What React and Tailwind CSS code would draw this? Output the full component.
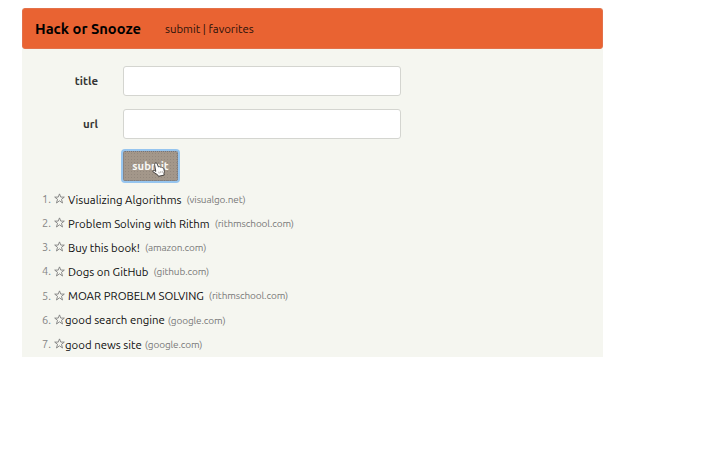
const stories = [
  { title: "Visualizing Algorithms", host: "visualgo.net", gap: "ml-[3px]", hostGap: "ml-[5px]" },
  { title: "Problem Solving with Rithm", host: "rithmschool.com", gap: "ml-[3px]", hostGap: "ml-[5px]" },
  { title: "Buy this book!", host: "amazon.com", gap: "ml-[3px]", hostGap: "ml-[5px]" },
  { title: "Dogs on GitHub", host: "github.com", gap: "ml-[3px]", hostGap: "ml-[5px]" },
  { title: "MOAR PROBELM SOLVING", host: "rithmschool.com", gap: "ml-[3px]", hostGap: "ml-[5px]" },
  { title: "good search engine", host: "google.com", gap: "ml-0", hostGap: "ml-[3px]" },
  { title: "good news site", host: "google.com", gap: "ml-0", hostGap: "ml-[3px]" },
];

function Star() {
  return (
    <svg className="mb-[1px] h-[11px] w-[11px] shrink-0" viewBox="0 0 11 11" fill="none" stroke="#808080" strokeWidth="0.9">
      <path d="M5.5 .9 6.8 4.1H10.3L7.5 6.3 8.5 10 5.5 7.8 2.5 10 3.5 6.3 .7 4.1H4.2Z" />
    </svg>
  );
}

function Hand() {
  return (
    <svg className="absolute left-[28px] top-[10px] h-[15px] w-[13px]" viewBox="0 0 13 15">
      <path
        d="M3.2 1.2c.8-.6 1.7-.1 2 .7l1.2 3c.7-.5 1.4-.3 1.8.3.8-.4 1.5-.1 1.8.5.9-.2 1.5.2 1.8 1l.6 2.8-.5 2 .3 1.6-5.7 1.2-.9-1.5L1 9.8c-.5-.9.6-1.9 1.6-1.2l1.2.8L2.6 2.6c-.1-.6 0-1 .6-1.4Z"
        fill="#fff"
        stroke="#3b3835"
        strokeWidth="0.9"
      />
      <path d="M6.8 9.7l.4 1.8M8.5 9.3l.4 1.8M10.1 8.9l.4 1.8" stroke="#6b6560" strokeWidth=".5" />
    </svg>
  );
}

function Field({ label }) {
  return (
    <div className="flex h-[30px] items-center">
      <label className="w-[76px] text-right text-[11.5px] leading-4 font-bold text-[#363636]">{label}</label>
      <input className="ml-[25px] h-[30px] w-[278px] rounded-[3px] border border-[#d4d5d0] bg-white" />
    </div>
  );
}

export default function App() {
  return (
    <div className="h-[467px] w-[701px] overflow-hidden bg-white pl-[22px] pt-2 font-['Ubuntu','Noto_Sans',sans-serif]">
      <main className="h-[349px] w-[581px] bg-[#f5f6f0]">
        <nav className="flex h-[41px] items-center rounded-[3px] border border-[#e3714a] bg-[#e96332] pl-3 text-black">
          <b className="w-[130px] whitespace-nowrap pt-px text-[14.7px]">Hack or Snooze</b>
          <span className="whitespace-nowrap text-[11.4px] text-[#2a120a]">submit | favorites</span>
        </nav>
        <form className="flex flex-col gap-[12.5px] pt-[17px]">
          <Field label="title" />
          <Field label="url" />
          <button
            type="button"
            className="relative ml-[101px] h-[30px] w-[55px] rounded-[2px] border border-dotted border-[#6f7480] bg-[#a3978a] bg-[radial-gradient(#93887d_0.7px,transparent_0.9px)] bg-[length:3px_3px] pt-px text-[11.3px] font-bold text-[#f8f7f4] shadow-[0_0_0_2px_#96c5ef]"
          >
            submit
            <Hand />
          </button>
        </form>
        <ol className="pt-[6px]">
          {stories.map((s, i) => (
            <li key={s.title} className="flex h-[24.2px] items-center whitespace-nowrap pl-5">
              <span className="w-3 text-[11px] text-[#858585]">{i + 1}.</span>
              <Star />
              <span className={`${s.gap} text-[11.4px] text-[#0d0d0d]`}>{s.title}</span>
              <span className={`${s.hostGap} text-[10px] tracking-[-0.12px] text-[#787878]`}>({s.host})</span>
            </li>
          ))}
        </ol>
      </main>
    </div>
  );
}
